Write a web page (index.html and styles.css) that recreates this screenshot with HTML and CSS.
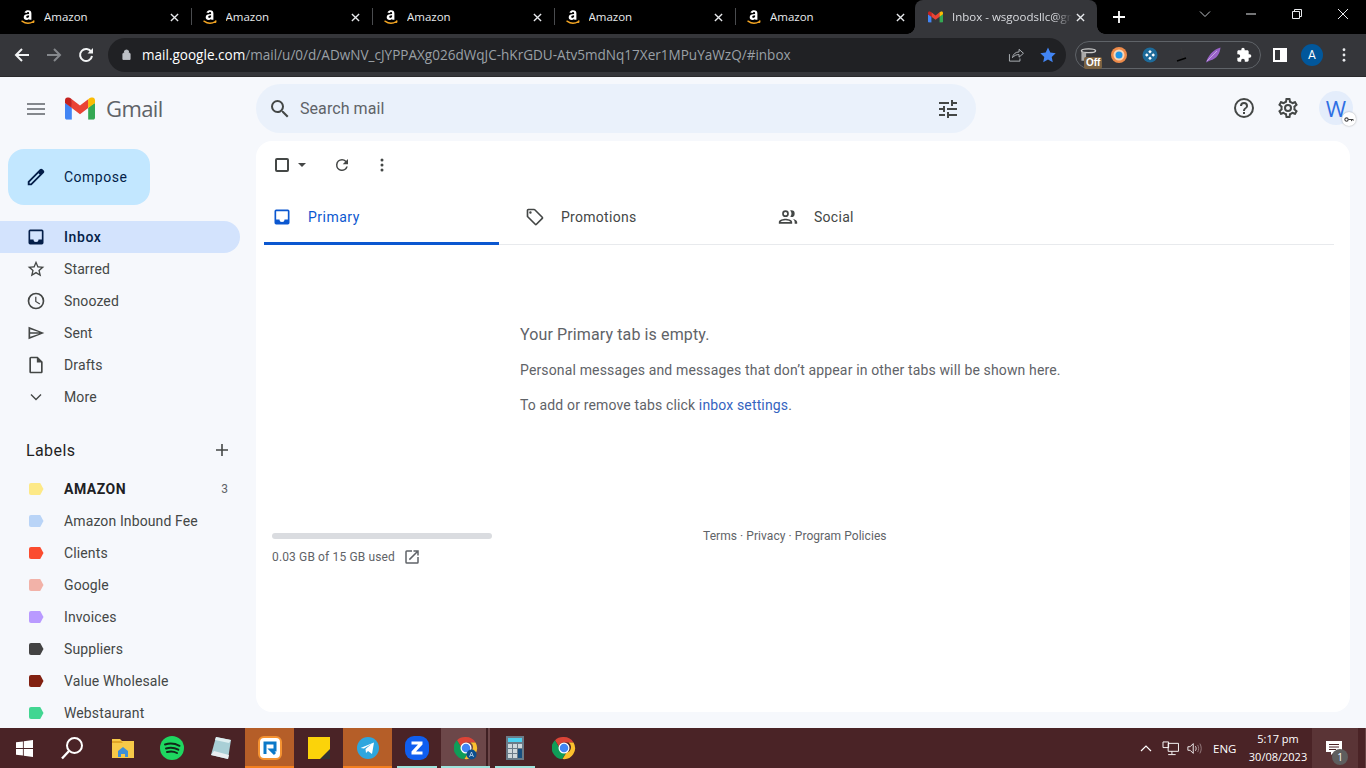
FILE: index.html
```html
<!DOCTYPE html>
<html lang="en">
<head>
<meta charset="utf-8">
<title>Inbox - Gmail</title>
<link rel="stylesheet" href="styles.css">
</head>
<body>
<svg class="defs" width="0" height="0" aria-hidden="true">
  <symbol id="amz" viewBox="0 0 16 16">
    <path d="M2 12.2c3.4 2.3 8 2.5 11.4.3" fill="none" stroke="#f5a623" stroke-width="1.4" stroke-linecap="round"/>
    <path d="M13.8 11.2l.2 2.2-2 .1" fill="none" stroke="#f5a623" stroke-width="1"/>
    <path d="M4.4 3.4C5.2 1.800 6.700 1.200 8 1.200c2.300 0 3.400 1.200 3.400 3.200v6.400H9.300l-.2-.9c-.7.7-1.500 1.100-2.500 1.100-1.700 0-2.900-1.100-2.900-2.800 0-2.100 1.800-3.100 5.400-3.200v-.6c0-.9-.4-1.300-1.100-1.300-.6 0-1 .3-1.300 1zM9.100 6.200c-2 .1-2.900.6-2.900 1.600 0 .7.400 1.100 1 1.100.8 0 1.900-.5 1.900-1.300z" fill="#fff" fill-rule="evenodd"/>
  </symbol>
  <symbol id="close" viewBox="0 0 10 10"><path d="M1 1l8 8M9 1L1 9" stroke="#e8eaed" stroke-width="1.500" fill="none"/></symbol>
  <symbol id="gm" viewBox="0 0 256 193">
    <path fill="#4285F4" d="M58.182 192.05V93.14L27.507 65.077 0 49.504v125.091c0 9.658 7.825 17.455 17.455 17.455h40.727Z"/>
    <path fill="#34A853" d="M197.818 192.05h40.727c9.659 0 17.455-7.826 17.455-17.455V49.505l-31.156 17.837-27.026 25.798v98.91Z"/>
    <path fill="#EA4335" d="m58.182 93.14-4.174-38.647 4.174-36.989L128 69.868l69.818-52.364 4.669 34.992-4.669 40.644L128 145.504z"/>
    <path fill="#FBBC04" d="M197.818 17.504V93.14L256 49.504V26.231c0-21.585-24.64-33.89-41.89-20.945l-16.292 12.218Z"/>
    <path fill="#C5221F" d="m0 49.504 26.759 20.07L58.182 93.14V17.504L41.89 5.286C24.61-7.66 0 4.646 0 26.23v23.273Z"/>
  </symbol>
  <symbol id="chrome" viewBox="0 0 48 48">
    <path fill="#db4437" d="M24 2a22 22 0 0 1 19 11H24a11 11 0 0 0-10.500 7.500L6 8.500A22 22 0 0 1 24 2z"/>
    <path fill="#0f9d58" d="M24 46A22 22 0 0 1 6 8.500l9.500 16.500A11 11 0 0 0 28 34.200l-7.500 11.500A22 22 0 0 1 24 46z"/>
    <path fill="#fbc02d" d="M43 13a22 22 0 0 1-22 33l8-13a11 11 0 0 0 4-20z"/>
    <circle cx="24" cy="24" r="11" fill="#fff"/><circle cx="24" cy="24" r="8.500" fill="#4285f4"/>
  </symbol>
</svg>

<header class="tabstrip">
  <div class="tab"><svg class="tab-ico"><use href="#amz"/></svg><span class="tab-title">Amazon</span><svg class="tab-x"><use href="#close"/></svg></div>
  <div class="tab"><svg class="tab-ico"><use href="#amz"/></svg><span class="tab-title">Amazon</span><svg class="tab-x"><use href="#close"/></svg></div>
  <div class="tab"><svg class="tab-ico"><use href="#amz"/></svg><span class="tab-title">Amazon</span><svg class="tab-x"><use href="#close"/></svg></div>
  <div class="tab"><svg class="tab-ico"><use href="#amz"/></svg><span class="tab-title">Amazon</span><svg class="tab-x"><use href="#close"/></svg></div>
  <div class="tab tab-last"><svg class="tab-ico"><use href="#amz"/></svg><span class="tab-title">Amazon</span><svg class="tab-x"><use href="#close"/></svg></div>
  <div class="tab tab-active"><svg class="tab-ico-g" viewBox="0 0 256 193"><use href="#gm"/></svg><span class="tab-title tab-fade">Inbox - wsgoodsllc@gmail.com</span><svg class="tab-x"><use href="#close"/></svg></div>
  <svg class="newtab" viewBox="0 0 12 12"><path d="M6 0v12M0 6h12" stroke="#fff" stroke-width="1.800"/></svg>
  <div class="winctl">
    <svg class="win-btn" viewBox="0 0 12 12"><path d="M1 3.500l5 5 5-5" fill="none" stroke="#bdc1c6"/></svg>
    <svg class="win-btn" viewBox="0 0 12 12"><path d="M1 6h10" stroke="#e8eaed"/></svg>
    <svg class="win-btn" viewBox="0 0 12 12"><path d="M1.500 3.500h7v7h-7zM3.500 3.500v-2h7v7h-2" fill="none" stroke="#e8eaed"/></svg>
    <svg class="win-btn win-close" viewBox="0 0 12 12"><path d="M1 1l10 10M11 1L1 11" stroke="#e8eaed"/></svg>
  </div>
</header>

<div class="toolbar">
  <svg class="nav-btn" viewBox="0 0 16 16"><path d="M15 8H2M8 2L2 8l6 6" fill="none" stroke="#f1f3f4" stroke-width="2"/></svg>
  <svg class="nav-btn" viewBox="0 0 16 16"><path d="M1 8h13M8 2l6 6-6 6" fill="none" stroke="#85888c" stroke-width="2"/></svg>
  <svg class="nav-btn" viewBox="0 0 16 16"><path d="M13.300 5A6 6 0 1 0 14 9" fill="none" stroke="#f1f3f4" stroke-width="2"/><path d="M15 1v5.500H9.500z" fill="#f1f3f4"/></svg>
  <div class="omnibox">
    <svg class="lock" viewBox="0 0 10 12"><path d="M2.500 5V3.500a2.500 2.500 0 0 1 5 0V5M1 5h8v6.500H1z" fill="#bdc1c6" stroke="#bdc1c6"/></svg>
    <span class="url"><span class="url-host">mail.google.com</span>/mail/u/0/d/ADwNV_cJYPPAXg026dWqJC-hKrGDU-Atv5mdNq17Xer1MPuYaWzQ/#inbox</span>
    <svg class="share" viewBox="0 0 18 16"><path d="M1.500 7v8h12v-3M5 11c.5-4 3.500-6.500 7.500-6.500V1.500l5 4.500-5 4.500V7.500C9.500 7.500 7 8.500 5 11z" fill="none" stroke="#bdc1c6"/></svg>
    <svg class="star" viewBox="0 0 16 16"><path d="M8 .6l2.300 5 5.400.6-4 3.700 1.100 5.400L8 12.600l-4.800 2.700 1.100-5.400-4-3.700 5.400-.6z" fill="#4285f4"/></svg>
  </div>
  <div class="ext-pill">
    <div class="ext ext-off">
      <svg class="ext-bucket" viewBox="0 0 18 16"><ellipse cx="9" cy="3.500" rx="7.500" ry="2" fill="none" stroke="#ccc" stroke-width="1.500"/><path d="M1.500 4v10h5V6" fill="#aaa"/></svg>
      <span class="off-badge">Off</span>
    </div>
    <div class="ext"><svg class="ext-ico" viewBox="0 0 16 16"><circle cx="8" cy="8" r="8" fill="#ee8b4a"/><circle cx="8" cy="8" r="5.500" fill="#f7d7b9"/><circle cx="8" cy="8" r="3.500" fill="#1e96e8"/></svg></div>
    <div class="ext"><svg class="ext-ico" viewBox="0 0 16 16"><circle cx="8" cy="8" r="7.500" fill="#1d6a99"/><path d="M8 3l1.800 1.800L8 6.600 6.200 4.800zM8 9.400l1.800 1.800L8 13l-1.800-1.800zM3 8l1.800-1.800L6.600 8 4.800 9.800zM9.400 8l1.800-1.800L13 8l-1.800 1.800z" fill="#fff"/></svg></div>
    <div class="ext"><svg class="ext-ico" viewBox="0 0 16 16"><path d="M7 1l2.500 10" stroke="#3a3a3a" fill="none"/><path d="M3 14l9-3" stroke="#000" stroke-width="1.500" fill="none"/></svg></div>
    <div class="ext"><svg class="ext-ico" viewBox="0 0 16 16"><path d="M1 15.500C3 9 8 2.500 15.500.5 15 6 12 12 5 13.500z" fill="#9a63c9"/><path d="M2 14L12 4" stroke="#d8c2ec" stroke-width=".7"/></svg></div>
    <div class="ext"><svg class="ext-ico" viewBox="0 0 24 24"><path d="M20.500 11H19V7c0-1.100-.9-2-2-2h-4V3.500a2.500 2.500 0 0 0-5 0V5H4c-1.100 0-2 .9-2 2v3.800h1.500c1.500 0 2.700 1.200 2.700 2.700S5 16.200 3.500 16.200H2V20c0 1.100.9 2 2 2h3.800v-1.500c0-1.500 1.200-2.700 2.700-2.700s2.700 1.200 2.700 2.700V22H17c1.100 0 2-.9 2-2v-4h1.500a2.500 2.500 0 0 0 0-5z" fill="#fff"/></svg></div>
  </div>
  <svg class="panel-btn" viewBox="0 0 14 14"><path d="M0 0h14v14H0zM2 2v10h5V2z" fill="#fff" fill-rule="evenodd"/></svg>
  <span class="profile">A</span>
  <svg class="kebab" viewBox="0 0 4 16"><circle cx="2" cy="2" r="1.600" fill="#e8eaed"/><circle cx="2" cy="8" r="1.600" fill="#e8eaed"/><circle cx="2" cy="14" r="1.600" fill="#e8eaed"/></svg>
</div>

<div class="page">
  <div class="gbar">
    <div class="brand">
      <svg class="burger" viewBox="0 0 18 12"><path d="M0 1h18M0 6h18M0 11h18" stroke="#5f6368" stroke-width="1.600"/></svg>
      <svg class="gm-logo" viewBox="0 0 256 193"><use href="#gm"/></svg>
      <span class="gm-word">Gmail</span>
    </div>
    <div class="search">
      <svg class="search-ico" viewBox="0 0 24 24"><path d="M15.500 14h-.79l-.28-.27A6.471 6.471 0 0 0 16 9.500 6.500 6.500 0 1 0 9.500 16c1.610 0 3.090-.59 4.230-1.570l.27.28v.79l5 4.990L20.490 19l-4.990-5zm-6 0C7.010 14 5 11.990 5 9.500S7.010 5 9.500 5 14 7.010 14 9.500 11.990 14 9.500 14z" fill="#444746"/></svg>
      <span class="search-text">Search mail</span>
      <svg class="tune" viewBox="0 0 24 24"><path d="M3 17v2h6v-2zM3 5v2h10V5zm10 16v-2h8v-2h-8v-2h-2v6zM7 9v2H3v2h4v2h2V9zm14 4v-2H11v2zm-6-4h2V7h4V5h-4V3h-2z" fill="#444746"/></svg>
    </div>
    <div class="gbar-right">
      <svg class="gb-ico" viewBox="0 0 24 24"><path d="M11 18h2v-2h-2zm1-16a10 10 0 1 0 0 20 10 10 0 0 0 0-20zm0 18a8 8 0 1 1 0-16 8 8 0 0 1 0 16zm0-14a4 4 0 0 0-4 4h2a2 2 0 1 1 4 0c0 2-3 1.750-3 5h2c0-2.250 3-2.500 3-5a4 4 0 0 0-4-4z" fill="#444746"/></svg>
      <svg class="gb-ico" viewBox="0 0 24 24"><path d="M19.430 12.980c.04-.32.07-.64.07-.98s-.03-.66-.07-.98l2.110-1.650c.19-.15.24-.42.120-.64l-2-3.460c-.12-.22-.39-.3-.61-.22l-2.490 1c-.52-.4-1.080-.73-1.690-.98l-.38-2.650A.49.49 0 0 0 14 2h-4c-.25 0-.46.18-.49.42l-.38 2.650c-.61.25-1.170.59-1.690.98l-2.490-1c-.23-.09-.49 0-.61.22l-2 3.460c-.13.22-.07.49.12.64l2.110 1.650c-.04.32-.07.65-.07.98s.03.66.07.98l-2.110 1.650c-.19.15-.24.42-.12.64l2 3.460c.12.22.39.3.61.22l2.490-1c.52.4 1.080.73 1.690.98l.38 2.650c.03.24.24.42.49.42h4c.25 0 .46-.18.49-.42l.38-2.650c.61-.25 1.170-.59 1.690-.98l2.490 1c.23.09.49 0 .61-.22l2-3.460c.12-.22.07-.49-.12-.64zM17.450 11.270c.04.31.05.52.05.73s-.02.43-.05.73l-.14 1.130.89.700 1.080.84-.7 1.210-1.270-.51-1.040-.42-.9.680c-.43.32-.84.56-1.250.73l-1.060.43-.16 1.130-.2 1.350h-1.400l-.19-1.350-.16-1.130-1.060-.43c-.43-.18-.83-.41-1.230-.71l-.91-.7-1.060.43-1.270.51-.7-1.210 1.080-.84.89-.7-.14-1.130c-.03-.31-.05-.54-.05-.74s.02-.43.05-.73l.14-1.130-.89-.7-1.080-.84.7-1.210 1.270.51 1.040.42.9-.68c.43-.32.84-.56 1.250-.73l1.060-.43.16-1.130.2-1.350h1.390l.19 1.350.16 1.130 1.060.43c.43.18.83.41 1.230.71l.91.7 1.060-.43 1.270-.51.7 1.210-1.070.85-.89.7zM12 8a4 4 0 1 0 0 8 4 4 0 0 0 0-8zm0 6a2 2 0 1 1 0-4 2 2 0 0 1 0 4z" fill="#444746"/></svg>
      <div class="account">
        <span class="account-w">W</span>
        <span class="key-badge"><svg class="key-ico" viewBox="0 0 12 8"><circle cx="3" cy="4" r="2" fill="none" stroke="#444" stroke-width="1.300"/><path d="M5 4h6M9 4v2M11 4v1.500" stroke="#444" stroke-width="1.200"/></svg></span>
      </div>
    </div>
  </div>

  <div class="main">
    <aside class="side">
      <button class="compose">
        <svg class="compose-ico" viewBox="0 0 24 24"><path d="M20.410 4.940l-1.350-1.350c-.78-.78-2.050-.78-2.830 0L3 16.820V21h4.180L20.410 7.770c.79-.78.79-2.050 0-2.830zM6.350 19H5v-1.350l9.700-9.700 1.350 1.350z" fill="#041e49"/></svg>
        <span>Compose</span>
      </button>
      <nav class="nav">
        <a class="row row-on"><span class="row-ico"><svg class="ico-20" viewBox="0 0 24 24"><path d="M19 3H5a2 2 0 0 0-2 2v14a2 2 0 0 0 2 2h14a2 2 0 0 0 2-2V5a2 2 0 0 0-2-2zm0 12h-4a3 3 0 0 1-6 0H5V5h14z" fill="#041e49"/></svg></span>Inbox</a>
        <a class="row"><span class="row-ico"><svg class="ico-20" viewBox="0 0 24 24"><path d="M22 9.240l-7.190-.62L12 2 9.190 8.630 2 9.240l5.460 4.730L5.820 21 12 17.270 18.180 21l-1.630-7.030zM12 15.400l-3.760 2.270 1-4.280-3.320-2.880 4.380-.38L12 6.100l1.710 4.040 4.380.38-3.320 2.880 1 4.280z" fill="#444746"/></svg></span>Starred</a>
        <a class="row"><span class="row-ico"><svg class="ico-20" viewBox="0 0 24 24"><path d="M12 2a10 10 0 1 0 0 20 10 10 0 0 0 0-20zm0 18a8 8 0 1 1 0-16 8 8 0 0 1 0 16zm.5-13H11v6l5.250 3.150.75-1.230-4.500-2.670z" fill="#444746"/></svg></span>Snoozed</a>
        <a class="row"><span class="row-ico"><svg class="ico-20" viewBox="0 0 24 24"><path d="M3 4.500v15L22 12zM5 7.500l11 3.500H5zM5 13h11L5 16.500z" fill="#444746" fill-rule="evenodd"/></svg></span>Sent</a>
        <a class="row"><span class="row-ico"><svg class="ico-20" viewBox="0 0 24 24"><path d="M14 2H6c-1.100 0-2 .9-2 2v16c0 1.100.9 2 2 2h12c1.100 0 2-.9 2-2V8zm4 18H6V4h7v5h5z" fill="#444746"/></svg></span>Drafts</a>
        <a class="row"><span class="row-ico"><svg class="ico-12" viewBox="0 0 12 8"><path d="M1 1.500l5 5 5-5" fill="none" stroke="#444746" stroke-width="1.400"/></svg></span>More</a>
      </nav>
      <div class="labels-head">
        <span>Labels</span>
        <svg class="plus" viewBox="0 0 14 14"><path d="M7 1v12M1 7h12" stroke="#444746" stroke-width="1.600"/></svg>
      </div>
      <div class="labels">
        <a class="row row-bold"><span class="row-ico"><i class="tag tag-yellow"></i></span>AMAZON<span class="count">3</span></a>
        <a class="row"><span class="row-ico"><i class="tag tag-blue"></i></span>Amazon Inbound Fee</a>
        <a class="row"><span class="row-ico"><i class="tag tag-red"></i></span>Clients</a>
        <a class="row"><span class="row-ico"><i class="tag tag-pink"></i></span>Google</a>
        <a class="row"><span class="row-ico"><i class="tag tag-purple"></i></span>Invoices</a>
        <a class="row"><span class="row-ico"><i class="tag tag-dark"></i></span>Suppliers</a>
        <a class="row"><span class="row-ico"><i class="tag tag-brown"></i></span>Value Wholesale</a>
        <a class="row"><span class="row-ico"><i class="tag tag-green"></i></span>Webstaurant</a>
      </div>
    </aside>

    <section class="card">
      <div class="actions">
        <span class="checkbox"></span>
        <span class="caret"></span>
        <svg class="refresh" viewBox="0 0 24 24"><path d="M17.650 6.350A7.960 7.960 0 0 0 12 4a8 8 0 1 0 7.730 10h-2.080A6 6 0 1 1 12 6c1.660 0 3.140.69 4.220 1.780L13 11h7V4z" fill="#444746"/></svg>
        <svg class="dots" viewBox="0 0 4 14"><circle cx="2" cy="2" r="1.500" fill="#444746"/><circle cx="2" cy="7" r="1.500" fill="#444746"/><circle cx="2" cy="12" r="1.500" fill="#444746"/></svg>
      </div>
      <div class="cats">
        <div class="cat cat-on"><svg class="ico-20" viewBox="0 0 24 24"><path d="M19 3H5a2 2 0 0 0-2 2v14a2 2 0 0 0 2 2h14a2 2 0 0 0 2-2V5a2 2 0 0 0-2-2zm0 12h-4a3 3 0 0 1-6 0H5V5h14z" fill="#0b57d0"/></svg><span>Primary</span></div>
        <div class="cat"><svg class="ico-20" viewBox="0 0 24 24"><path d="M21.410 11.580l-9-9A2 2 0 0 0 11 2H4a2 2 0 0 0-2 2v7c0 .55.22 1.050.59 1.420l9 9a2 2 0 0 0 2.830 0l7-7a2 2 0 0 0 0-2.840zM13 20l-9-9V4h7l9 9zM6.500 5a1.500 1.500 0 1 0 0 3 1.500 1.500 0 0 0 0-3z" fill="#444746"/></svg><span>Promotions</span></div>
        <div class="cat"><svg class="ico-20" viewBox="0 0 24 24"><path d="M9 12a4 4 0 1 0 0-8 4 4 0 0 0 0 8zm0-6a2 2 0 1 1 0 4 2 2 0 0 1 0-4zm0 8c-2.700 0-8 1.300-8 4v2h16v-2c0-2.700-5.300-4-8-4zm-6 4c.2-.7 3.300-2 6-2s5.800 1.300 6 2zm13-6a4 4 0 0 0 0-8c-.5 0-1 .1-1.400.2A6 6 0 0 1 14.600 11.800c.4.100.9.200 1.400.200zm1 2c1.800.8 3 2 3 4v2h3v-2c0-2.100-3.400-3.500-6-4z" fill="#444746"/></svg><span>Social</span></div>
      </div>
      <div class="empty">
        <h1 class="empty-h">Your Primary tab is empty.</h1>
        <p class="empty-p">Personal messages and messages that don’t appear in other tabs will be shown here.</p>
        <p class="empty-p">To add or remove tabs click <a class="lnk">inbox settings</a>.</p>
      </div>
      <footer class="foot">
        <div class="storage">
          <div class="bar"></div>
          <div class="used"><span>0.03 GB of 15 GB used</span><svg class="ext-link" viewBox="0 0 24 24"><path d="M19 19H5V5h7V3H5a2 2 0 0 0-2 2v14a2 2 0 0 0 2 2h14a2 2 0 0 0 2-2v-7h-2zM14 3v2h3.590l-9.830 9.830 1.410 1.410L19 6.410V10h2V3z" fill="#5f6368"/></svg></div>
        </div>
        <div class="terms">Terms · Privacy · Program Policies</div>
      </footer>
    </section>
  </div>
</div>

<div class="taskbar">
  <div class="tb"><svg class="tb-ico tb-win" viewBox="0 0 16 16"><path d="M0 2.200l6.500-.9v6.300H0zM7.300 1.200L16 0v7.600H7.300zM0 8.400h6.500v6.300L0 13.800zM7.300 8.400H16V16l-8.700-1.200z" fill="#fff"/></svg></div>
  <div class="tb"><svg class="tb-ico tb-search" viewBox="0 0 24 24"><circle cx="14.500" cy="9.500" r="7.500" fill="none" stroke="#fff" stroke-width="2"/><path d="M9 15l-7 7.500" stroke="#fff" stroke-width="2.400"/></svg></div>
  <div class="tb"><svg class="tb-ico" viewBox="0 0 24 24"><path d="M1 3h8l2 2h12v17H1z" fill="#f7c948"/><path d="M1 5h9l2 2H1z" fill="#e0a526"/><path d="M7 21v-6l5-4 5 4v6h-3v-3h-4v3z" fill="#3d8fd8"/></svg></div>
  <div class="tb"><svg class="tb-ico" viewBox="0 0 24 24"><circle cx="12" cy="12" r="12" fill="#1ed760"/><path d="M5 8.500c5-1.500 10-1 14.500 1.300M6 12.500c4.300-1.200 8.500-.8 12.300 1.200M7 16c3.500-1 7-.7 10 1" fill="none" stroke="#11291a" stroke-width="2" stroke-linecap="round"/></svg></div>
  <div class="tb"><svg class="tb-ico" viewBox="0 0 24 24"><path d="M7 1l15 3-3 19L2 19z" fill="#a9cfd6"/><path d="M7 1l15 3-2 3L6 4z" fill="#dfeef0"/><path d="M2 19l17 4 1-4L5 15z" fill="#e8edf0"/></svg></div>
  <div class="tb tb-alert"><svg class="tb-ico" viewBox="0 0 24 24"><rect x="1" y="1" width="22" height="22" rx="5" fill="#fff" stroke="#f59331" stroke-width="2"/><path d="M7 18V7h10v7h-4l4 4" fill="none" stroke="#0a78c8" stroke-width="3"/></svg></div>
  <div class="tb"><svg class="tb-ico" viewBox="0 0 24 24"><path d="M1 1h22v22H1z" fill="#fbd30a"/><path d="M13 23l10-10v10z" fill="#333"/></svg></div>
  <div class="tb tb-alert"><svg class="tb-ico" viewBox="0 0 24 24"><circle cx="12" cy="12" r="11" fill="#2ea6de"/><path d="M4.500 12L18 6.500 16 18l-4-3-2 2-.5-4 6-5-7.500 4.500z" fill="#fff"/></svg></div>
  <div class="tb tb-run"><svg class="tb-ico" viewBox="0 0 24 24"><rect x="0" y="0" width="24" height="24" rx="9" fill="#0f5ef0"/><path d="M6.500 5.500h11v3L11 15.500h6.500v3h-11v-3l6.500-7H6.500z" fill="#fff"/></svg></div>
  <div class="tb tb-active"><svg class="tb-ico" viewBox="0 0 48 48"><use href="#chrome"/><circle cx="35" cy="37" r="10" fill="#0b4f8e"/><path d="M31 42l4-10 4 10M32.500 39h5" fill="none" stroke="#cfe3f5" stroke-width="1.500"/></svg></div>
  <div class="tb tb-run"><svg class="tb-ico" viewBox="0 0 24 24"><rect x="3" y="0" width="18" height="24" fill="#6b7b88"/><rect x="5" y="2" width="14" height="4" fill="#4dd0f0"/><path d="M5 8h4v4H5zM10 8h4v4h-4zM15 8h4v4h-4zM5 13h4v4H5zM10 13h4v4h-4zM5 18h4v4H5zM10 18h4v4h-4z" fill="#cfd8dc"/><path d="M15 13h4v9h-4z" fill="#174f80"/></svg></div>
  <div class="tb"><svg class="tb-ico" viewBox="0 0 48 48"><use href="#chrome"/></svg></div>
  <div class="tray">
    <svg class="tray-chev" viewBox="0 0 12 8"><path d="M1 7l5-5 5 5" fill="none" stroke="#fff" stroke-width="1.200"/></svg>
    <svg class="tray-net" viewBox="0 0 18 16"><path d="M6.500 2.500h11v8.500h-11zM1 1h6v6H1zM10.500 11v3M6.500 14.500h8" fill="#4a2326" stroke="#fff"/></svg>
    <svg class="tray-vol" viewBox="0 0 18 14"><path d="M1 5h2.500L7 1.500v11L3.500 9H1z" fill="none" stroke="#fff"/><path d="M9.500 4.500c1 1.500 1 3.500 0 5" fill="none" stroke="#fff"/><path d="M12 3c1.500 2.500 1.500 5.500 0 8M14.500 1.500c2 3.500 2 7.500 0 11" fill="none" stroke="#9c8486"/></svg>
    <span class="tray-lang">ENG</span>
    <div class="clock"><div>5:17 pm</div><div>30/08/2023</div></div>
    <div class="notif">
      <svg class="notif-ico" viewBox="0 0 16 15"><path d="M0 0h16v11H8l-3 3v-3H0z" fill="#fff"/><path d="M3 3.500h10M3 6h10M3 8.500h7" stroke="#4a2326"/></svg>
      <span class="notif-badge">1</span>
    </div>
    <div class="peek"></div>
  </div>
</div>
</body>
</html>
```
FILE: styles.css
```css
* { box-sizing: border-box; }
html, body { margin: 0; height: 100%; overflow: hidden; }
body { width: 1366px; height: 768px; display: flex; flex-direction: column; font-family: Roboto, "Liberation Sans", sans-serif; background: #f6f8fc; }
.defs { display: block; height: 0; }
svg { display: block; flex: none; }

/* tab strip */
.tabstrip { height: 34px; background: #000; display: flex; align-items: stretch; padding-left: 10px; color: #e8eaed; font-family: "Open Sans", "Liberation Sans", sans-serif; font-size: 11.500px; flex: none; }
.tab { width: 181.500px; display: flex; align-items: center; padding-left: 10px; padding-right: 13px; position: relative; }
.tab::after { content: ""; position: absolute; right: 0; top: 8px; bottom: 9px; width: 1px; background: #4a4c4f; }
.tab-last::after { display: none; }
.tab-ico { width: 16px; height: 16px; margin-right: 8px; }
.tab-title { flex: 1; white-space: nowrap; overflow: hidden; padding-bottom: 1px; }
.tab-x { width: 9px; height: 9px; margin-left: 4px; }
.tab-active { background: #35363a; border-radius: 8px 8px 0 0; margin-left: -2.500px; width: 182px; padding-left: 13px; padding-right: 12px; }
.tab-active::before, .tab-active::after { content: ""; display: block; position: absolute; bottom: 0; top: auto; width: 8px; height: 8px; background: radial-gradient(circle at 0 0, #000 7.500px, #35363a 8px); }
.tab-active::before { left: -8px; }
.tab-active::after { right: -8px; background: radial-gradient(circle at 100% 0, #000 7.500px, #35363a 8px); }
.tab-ico-g { width: 15px; height: 12px; margin-right: 9px; }
.tab-fade { color: #dadce0; mask-image: linear-gradient(90deg, #000 85%, transparent); -webkit-mask-image: linear-gradient(90deg, #000 85%, transparent); }
.newtab { width: 12px; height: 12px; align-self: center; margin-left: 16px; }
.winctl { display: flex; align-items: center; margin-left: auto; height: 28px; }
.win-btn { width: 12px; height: 12px; margin-right: 34px; }
.win-close { margin-right: 17px; }

/* toolbar */
.toolbar { height: 43px; background: #35363a; border-bottom: 1px solid #2a2a2c; display: flex; align-items: center; padding: 0 0 1px 14px; flex: none; }
.nav-btn { width: 16px; height: 16px; margin-right: 16px; }
.omnibox { width: 958px; height: 34px; margin-left: -2px; border-radius: 17px; background: #202124; display: flex; align-items: center; padding: 0 10px 0 14px; }
.lock { width: 9px; height: 11px; margin-right: 11px; }
.url { flex: 1; color: #9aa0a6; font-family: "Open Sans", "Liberation Sans", sans-serif; font-size: 13.550px; white-space: nowrap; overflow: hidden; }
.url-host { color: #fff; }
.share { width: 16px; height: 14px; margin-right: 16px; }
.star { width: 16px; height: 16px; }
.ext-pill { width: 186px; height: 28px; margin-left: 9px; border: 1px solid #5f6368; border-radius: 14px; display: flex; align-items: center; padding-left: 6px; }
.ext { width: 32px; display: flex; justify-content: center; position: relative; }
.ext-off { width: 24px; margin-left: -2px; justify-content: flex-start; }
.ext-ico { width: 16px; height: 16px; }
.ext-bucket { width: 17px; height: 16px; }
.off-badge { position: absolute; left: 4px; top: 10px; background: #7a6242; color: #fff; font: bold 10px/12px "Liberation Sans", sans-serif; padding: 0 2px; border-radius: 2px; }
.panel-btn { width: 14px; height: 14px; margin-left: 12px; }
.profile { width: 22px; height: 22px; margin-left: 14px; border-radius: 50%; background: #01579b; color: #fff; font-size: 12px; display: flex; align-items: center; justify-content: center; }
.kebab { width: 4px; height: 14px; margin-left: 19px; }

/* page */
.page { flex: 1; min-height: 0; display: flex; flex-direction: column; overflow: hidden; }
.gbar { height: 64px; display: flex; align-items: center; padding-bottom: 1px; flex: none; }
.brand { width: 256px; display: flex; align-items: center; padding-left: 27px; }
.burger { width: 18px; height: 12px; margin-right: 20px; }
.gm-logo { width: 30px; height: 23px; }
.gm-word { margin-left: 11px; margin-top: -2px; font-family: "Open Sans", "Liberation Sans", sans-serif; font-size: 22px; color: #5f6368; letter-spacing: -.6px; }
.search { width: 720px; height: 49px; border-radius: 25px; background: #eaf1fb; display: flex; align-items: center; padding: 0 16px 0 12px; }
.search-ico { width: 24px; height: 24px; margin-right: 8px; }
.search-text { flex: 1; font-size: 16px; letter-spacing: .07px; color: #5f6368; padding-bottom: 1px; }
.tune { width: 24px; height: 24px; }
.gbar-right { margin-left: auto; display: flex; align-items: center; padding-right: 13px; }
.gb-ico { width: 24px; height: 24px; margin-right: 20px; margin-top: -2px; }
.account { width: 34px; height: 34px; border-radius: 50%; background: #e4edfb; position: relative; display: flex; align-items: center; justify-content: center; margin-left: -1px; margin-top: -1px; }
.account-w { color: #2f6fe4; font-family: "Open Sans", "Liberation Sans", sans-serif; font-size: 22px; }
.key-badge { position: absolute; right: -3px; bottom: -1px; width: 14px; height: 14px; border-radius: 50%; background: #fff; box-shadow: 0 0 2px rgba(0,0,0,.35); display: flex; align-items: center; justify-content: center; }
.key-ico { width: 10px; height: 7px; }

.main { flex: 1; min-height: 0; display: flex; padding-bottom: 16px; }
.side { width: 256px; flex: none; margin-bottom: -16px; padding-top: 8px; overflow: hidden; font-size: 14px; letter-spacing: .12px; color: #444746; }
.compose { width: 142px; height: 56px; margin-left: 8px; border: 0; border-radius: 16px; background: #c2e7ff; display: flex; align-items: center; padding: 0 0 0 17px; font: 400 14px Roboto, sans-serif; letter-spacing: .5px; color: #041e49; }
.compose-ico { width: 22px; height: 22px; margin-right: 17px; }
.nav { margin-top: 16px; }
.row { width: 240px; height: 32px; display: flex; align-items: center; border-radius: 0 16px 16px 0; white-space: nowrap; }
.row-ico { width: 64px; flex: none; display: flex; justify-content: center; padding-left: 8px; }
.row-on { background: #d3e3fd; color: #041e49; font-weight: 500; letter-spacing: .6px; }
.row-bold { color: #202124; font-weight: 700; letter-spacing: .5px; }
.ico-20 { width: 20px; height: 20px; }
.ico-12 { width: 12px; height: 8px; }
.labels-head { height: 60px; padding: 14px 27px 0 26px; display: flex; align-items: center; justify-content: space-between; font-size: 16px; letter-spacing: .4px; color: #1f1f1f; }
.plus { width: 14px; height: 14px; }
.count { margin-left: auto; margin-right: 12px; font-size: 12px; font-weight: 400; letter-spacing: 0; color: #5f6368; }
.tag { display: block; width: 15px; height: 12px; border-radius: 2px 0 0 2px; clip-path: polygon(0 0, 78% 0, 100% 50%, 78% 100%, 0 100%); }
.tag-yellow { background: #fde987; }
.tag-blue { background: #b9d4f7; }
.tag-red { background: #fb4c2f; }
.tag-pink { background: #f2b2a8; }
.tag-purple { background: #b99aff; }
.tag-dark { background: #434343; }
.tag-brown { background: #822111; }
.tag-green { background: #42d692; }

/* card */
.card { flex: 1; background: #fff; border-radius: 16px; margin-right: 16px; min-width: 0; display: flex; flex-direction: column; }
.actions { height: 52px; display: flex; align-items: center; padding: 0 0 4px 19px; flex: none; }
.checkbox { width: 14px; height: 14px; border: 2px solid #444746; border-radius: 2px; }
.caret { width: 0; height: 0; border: 4px solid transparent; border-top: 4px solid #444746; border-bottom: 0; margin-left: 9px; }
.refresh { width: 18px; height: 18px; margin-left: 27px; }
.dots { width: 4px; height: 14px; margin-left: 29px; }
.cats { height: 52px; margin: 0 16px 0 8px; display: flex; border-bottom: 1px solid #e8eaed; flex: none; font-size: 14px; color: #444746; }
.cat { width: 235px; margin-right: 18px; display: flex; align-items: center; padding: 0 0 1px 8px; border-bottom: 3px solid transparent; margin-bottom: -1px; }
.cat span { margin-left: 16px; font-weight: 400; letter-spacing: .28px; }
.cat-on { color: #0b57d0; border-bottom-color: #0b57d0; }
.cat-on span { letter-spacing: .5px; }
.empty { margin-left: 264px; padding-top: 80px; color: #5f6368; flex: none; }
.empty-h { margin: 0; font-size: 16px; font-weight: 400; line-height: 20px; letter-spacing: .12px; }
.empty-p { margin: 15px 0 0; font-size: 14px; line-height: 20px; letter-spacing: .145px; }
.lnk { color: #3564c0; }
.foot { display: flex; padding: 0 0 0 16px; margin-top: 118px; font-size: 12px; letter-spacing: .14px; color: #5f6368; flex: none; }
.storage { width: 431px; }
.bar { width: 220px; height: 6px; border-radius: 3px; background: #dadce0; }
.used { display: flex; align-items: center; margin-top: 8px; height: 20px; }
.ext-link { width: 18px; height: 18px; margin-left: 8px; }
.terms { margin-top: -4px; line-height: 14px; letter-spacing: .06px; }

/* taskbar */
.taskbar { height: 40px; background: #4a2326; display: flex; align-items: stretch; flex: none; color: #fff; font-family: "Open Sans", "Liberation Sans", sans-serif; }
.tb { width: 49px; display: flex; align-items: center; justify-content: center; }
.tb-ico { width: 24px; height: 24px; }
.tb-win { width: 17px; height: 17px; }
.tb-search { margin-right: 3px; }
.tb-alert { background: linear-gradient(#f37f1f, #f37f1f) bottom / 100% 2px no-repeat, #b55e28; }
.tb-run { background: linear-gradient(#9ee3dc, #9ee3dc) bottom / 40px 2px no-repeat; }
.tb-active { background: linear-gradient(#9ee3dc, #9ee3dc) bottom / 100% 2px no-repeat, linear-gradient(90deg, #6c4749 45px, #3f2023 45px, #3f2023 47px, #6c4749 47px); }
.tray { margin-left: auto; display: flex; align-items: center; }
.tray-chev { width: 12px; height: 8px; margin-right: 10px; }
.tray-net { width: 17px; height: 15px; margin-right: 8px; }
.tray-vol { width: 16px; height: 13px; margin-right: 10px; }
.tray-lang { font-size: 11.500px; width: 23px; margin-right: 8px; white-space: nowrap; }
.clock { width: 68px; text-align: center; font-size: 11px; line-height: 18px; }
.notif { width: 46px; height: 40px; display: flex; align-items: center; justify-content: center; background: #5a3436; position: relative; }
.notif-ico { width: 16px; height: 15px; margin-right: 3px; }
.notif-badge { position: absolute; left: 20px; top: 21px; width: 16px; height: 16px; border-radius: 50%; background: #5e5e5e; color: #fff; font-size: 10px; line-height: 16px; text-align: center; }
.peek { width: 8px; height: 40px; border-right: 1px solid #6c4749; padding-right: 3px; }
```
